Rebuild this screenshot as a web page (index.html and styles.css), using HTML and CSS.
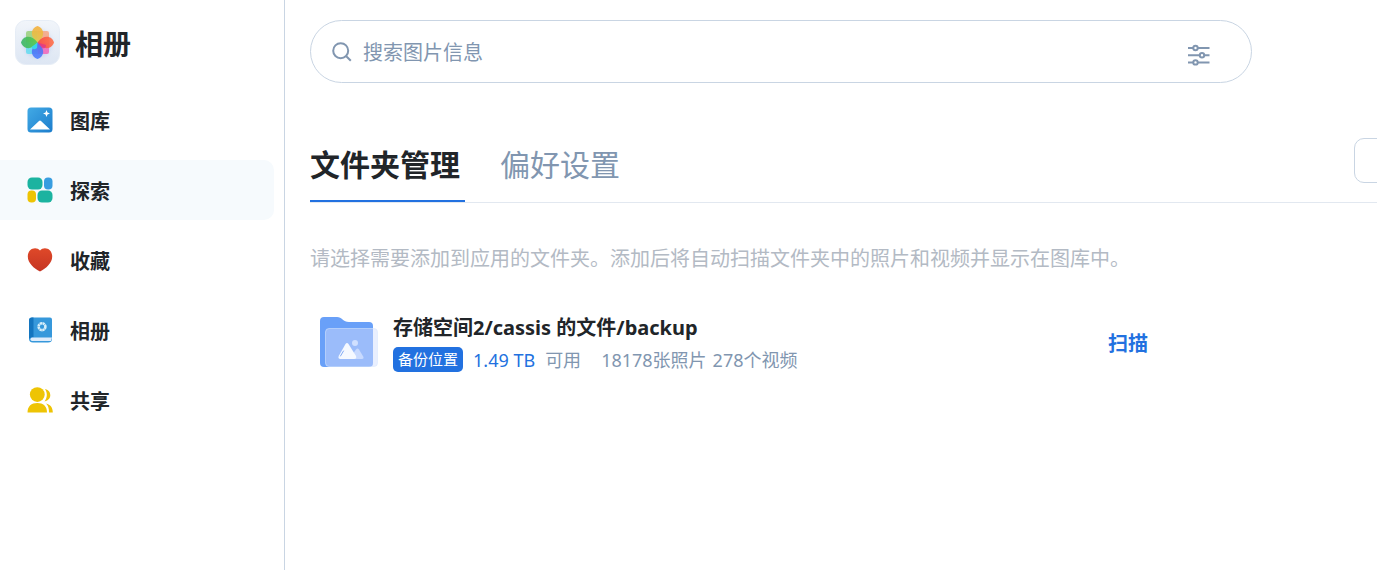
FILE: index.html
```html
<!DOCTYPE html>
<html lang="zh-CN">
<head>
<meta charset="utf-8">
<title>相册</title>
<link rel="stylesheet" href="styles.css">
</head>
<body>
<div class="app">
  <aside class="sidebar">
    <div class="brand">
      <svg class="brand-logo" viewBox="0 0 45 45" aria-hidden="true">
        <defs>
          <linearGradient id="tile" x1="0" y1="0" x2="0" y2="1"><stop offset="0" stop-color="#f1f5fa"/><stop offset="1" stop-color="#dde6f3"/></linearGradient>
          <linearGradient id="pt" x1="0" y1="0" x2="0" y2="1"><stop offset="0" stop-color="#f7b03c"/><stop offset="1" stop-color="#dfc94e"/></linearGradient>
          <linearGradient id="pr" x1="1" y1="0" x2="0" y2="0"><stop offset="0" stop-color="#ff7048"/><stop offset="1" stop-color="#f84c44"/></linearGradient>
          <linearGradient id="pb" x1="0" y1="1" x2="0" y2="0"><stop offset="0" stop-color="#4c80ff"/><stop offset="1" stop-color="#526bea"/></linearGradient>
          <linearGradient id="pl" x1="0" y1="0" x2="1" y2="0"><stop offset="0" stop-color="#38b568"/><stop offset="1" stop-color="#5bc947"/></linearGradient>
          <filter id="glow" x="-30%" y="-30%" width="160%" height="160%"><feGaussianBlur stdDeviation="2"/></filter>
        </defs>
        <rect x=".5" y=".5" width="44" height="44" rx="10" fill="url(#tile)" stroke="#e6edf6"/>
        <circle cx="22.500" cy="23.500" r="14" fill="#8aa7dc" opacity=".3" filter="url(#glow)"/>
        <path d="M22.500 22.500V11H32q2 0 2 2v9.500z" fill="#f7a681" opacity=".85"/>
        <path d="M22.500 22.500H11V13q0-2 2-2h9.500z" fill="#9dd282" opacity=".9"/>
        <path d="M22.500 22.500H34V32q0 2-2 2h-9.500z" fill="#f16cbc" opacity=".9"/>
        <path d="M22.500 22.500V34H13q-2 0-2-2v-9.500z" fill="#69dcf0" opacity=".9"/>
        <path d="M22.500 22.500C14 16 16 8 22.500 6C29 8 31 16 22.500 22.500z" fill="url(#pt)" opacity=".9"/>
        <path d="M22.500 22.500C29 14 37 16 39 22.500C37 29 29 31 22.500 22.500z" fill="url(#pr)" opacity=".9"/>
        <path d="M22.500 22.500C14 29 16 37 22.500 39C29 37 31 29 22.500 22.500z" fill="url(#pb)" opacity=".9"/>
        <path d="M22.500 22.500C16 14 8 16 6 22.500C8 29 16 31 22.500 22.500z" fill="url(#pl)" opacity=".9"/>
        <path d="M22.500 22.500L16.500 27Q18 31 22 28z" fill="#38d5e8"/>
        <path d="M22.500 22.500L27 28Q31 29 31 25z" fill="#df388a" opacity=".8"/>
      </svg>
      <h1 class="brand-name">相册</h1>
    </div>
    <nav class="nav">
      <a class="nav-item" href="#">
        <svg class="nav-icon" viewBox="0 0 26 26" aria-hidden="true">
          <defs><linearGradient id="sky" x1="0" y1="0" x2="1" y2="1"><stop offset="0" stop-color="#42aae5"/><stop offset="1" stop-color="#1c7dcc"/></linearGradient></defs>
          <rect x=".5" y=".5" width="25" height="25" rx="3.500" fill="url(#sky)"/>
          <path d="M3 22.500L12 14q1-1 2 0L23 22.500z" fill="#fff"/>
          <path d="M19.500 3l1 2.500 2.500 1-2.500 1-1 2.500-1-2.500-2.500-1 2.500-1z" fill="#fff"/>
        </svg>
        <span>图库</span>
      </a>
      <a class="nav-item active" href="#" aria-current="page">
        <svg class="nav-icon" viewBox="0 0 26 26" aria-hidden="true">
          <rect x=".5" y=".5" width="15" height="12" rx="4.500" fill="#1bb3a0"/>
          <rect x="17" y=".5" width="8.500" height="12" rx="4" fill="#389de0"/>
          <rect x=".5" y="13.500" width="8.500" height="12" rx="4" fill="#eec404"/>
          <rect x="10.500" y="13.500" width="15" height="12" rx="4.500" fill="#1bb3a0"/>
        </svg>
        <span>探索</span>
      </a>
      <a class="nav-item" href="#">
        <svg class="nav-icon" viewBox="0 0 26 26" aria-hidden="true">
          <defs><linearGradient id="heart" x1="0" y1="0" x2="0" y2="1"><stop offset="0" stop-color="#df4929"/><stop offset="1" stop-color="#c53523"/></linearGradient></defs>
          <path d="M13 3.500C9-1 .8 1.500.8 9.500C.8 16 7 21.500 13 24.500C19 21.500 25.200 16 25.200 9.500C25.200 1.500 17-1 13 3.500z" fill="url(#heart)"/>
        </svg>
        <span>收藏</span>
      </a>
      <a class="nav-item" href="#">
        <svg class="nav-icon" viewBox="0 0 26 26" aria-hidden="true">
          <path d="M5 .5H23q2 0 2 2V22q0 3.500-4 3.500H6q-4 0-4-4V3.500q0-3 3-3z" fill="#3698db"/>
          <path d="M2 3.500q0-3 3-3h1.500v20H5q-3 0-3 2z" fill="#1475bf"/>
          <path d="M5 20.500H25l-1 3.500H5q-1.500 0-1.500-1.700T5 20.500z" fill="#dfecfb"/>
          <circle cx="15" cy="9.700" r="3.400" fill="none" stroke="#d6eefa" stroke-width="2.600" stroke-dasharray="2.300 .37"/>
        </svg>
        <span>相册</span>
      </a>
      <a class="nav-item" href="#">
        <svg class="nav-icon" viewBox="0 0 26 26" aria-hidden="true" fill="#eec404">
          <circle cx="10.300" cy="7.600" r="7.400"/>
          <path d="M.5 25.500C.5 19 4.500 16 10.300 16S20 19 20 25.500z"/>
          <path d="M18 2C22 3 23.300 5.500 23.300 8.300S21.500 13.500 17.500 14.500C20.500 10.500 20.500 6 18 2z"/>
          <path d="M19 16.500C23.500 17.500 25.800 20.500 25.800 25.500H22C22 21 21 18.500 19 16.500z"/>
        </svg>
        <span>共享</span>
      </a>
    </nav>
  </aside>

  <main class="main">
    <form class="search">
      <svg class="search-icon" viewBox="0 0 20 20" aria-hidden="true"><circle cx="8.700" cy="8.700" r="7.500"/><path d="M14 14l4.800 4.800"/></svg>
      <input class="search-input" type="text" placeholder="搜索图片信息" aria-label="搜索图片信息">
      <button class="filter" type="button" aria-label="筛选">
        <svg class="filter-icon" viewBox="0 0 22 22" aria-hidden="true"><path d="M0 4H21.500M0 11.200H21.500M0 18.400H21.500"/><g fill="#fff"><circle cx="7.500" cy="4" r="2.200"/><circle cx="14" cy="11.200" r="2.200"/><circle cx="7.500" cy="18.400" r="2.200"/></g></svg>
      </button>
    </form>

    <div class="toolbar">
      <div class="tabs" role="tablist">
        <button class="tab selected" type="button" role="tab" aria-selected="true">文件夹管理</button>
        <button class="tab" type="button" role="tab" aria-selected="false">偏好设置</button>
      </div>
      <button class="add" type="button" aria-label="添加文件夹"></button>
    </div>

    <p class="hint">请选择需要添加到应用的文件夹。添加后将自动扫描文件夹中的照片和视频并显示在图库中。</p>

    <section class="folder">
      <svg class="folder-icon" viewBox="0 0 58 50" aria-hidden="true">
        <path d="M0 4Q0 0 4 0H17C22 0 23 5 29 5H49Q53 5 53 9V46Q53 50 49 50H4Q0 50 0 46z" fill="#69a0f8"/>
        <rect x="5.500" y="11.500" width="52" height="38" rx="3.500" fill="#c5d4fb" fill-opacity=".54" stroke="#dde9fe" stroke-opacity=".55"/>
        <path d="M53 12H54Q57 12 57 15V46Q57 49 54 49H53z" fill="#e9effe"/>
        <circle cx="35" cy="26" r="3" fill="#d0e0ff"/>
        <path d="M29 42L36 32.500Q37.500 30.500 39 32.500L43.500 40Q44 42 42 42z" fill="#c8dafe"/>
        <path d="M20 42Q17.500 41.500 19 38.500L25.500 27Q27 25 28.500 27L36 39Q37 42 34 42z" fill="#f5f9ff"/>
        <path d="M20.500 39L23.500 34" stroke="#82abf5" fill="none" stroke-linecap="round"/>
      </svg>
      <div class="folder-info">
        <h2 class="folder-path">存储空间2/cassis 的文件/backup</h2>
        <div class="folder-meta">
          <span class="badge">备份位置</span>
          <span class="size">1.49 TB</span>
          <span>可用</span>
          <span class="photos">18178张照片</span>
          <span class="videos">278个视频</span>
        </div>
      </div>
      <button class="scan" type="button">扫描</button>
    </section>
  </main>
</div>
</body>
</html>
```
FILE: styles.css
```css
* {
  box-sizing: border-box;
}

body {
  margin: 0;
  background: #fff;
  color: #212529;
  font-family: "Noto Sans", "Noto Sans CJK SC", sans-serif;
  font-size: 20px;
}

button,
input {
  padding: 0;
  border: 0;
  background: none;
  color: inherit;
  font: inherit;
}

button {
  cursor: pointer;
}

h1,
h2,
p {
  margin: 0;
}

.app {
  display: flex;
  min-height: 100vh;
}

.sidebar {
  flex: none;
  width: 285px;
  padding: 20px 10px 20px 0;
  border-right: 1px solid #c9d5e3;
}

.brand {
  display: flex;
  align-items: flex-start;
  gap: 15px;
  height: 45px;
  padding-left: 15px;
}

.brand-logo {
  width: 45px;
  height: 45px;
}

.brand-name {
  font-size: 28px;
  line-height: 48px;
}

.nav {
  display: flex;
  flex-direction: column;
  gap: 10px;
  margin-top: 25px;
}

.nav-item {
  display: flex;
  align-items: center;
  gap: 17px;
  height: 60px;
  padding-left: 27px;
  border-radius: 0 10px 10px 0;
  color: inherit;
  font-weight: 700;
  text-decoration: none;
}

.nav-item.active {
  background: #f6fafd;
}

.nav-icon {
  width: 26px;
  height: 26px;
}

.main {
  flex: 1;
  min-width: 0;
  padding: 20px 0 20px 25px;
  overflow: hidden;
}

.search {
  display: flex;
  align-items: center;
  height: 63px;
  margin-right: 125px;
  padding: 0 41px 0 21px;
  border: 1px solid #c9d5e3;
  border-radius: 32px;
  color: #8196b0;
}

.search-icon {
  flex: none;
  width: 20px;
  height: 20px;
  fill: none;
  stroke: #8196b0;
  stroke-width: 2;
}

.search-input {
  flex: 1;
  min-width: 0;
  margin: 0 11px;
  padding-top: 2px;
  outline: 0;
}

.search-input::placeholder {
  color: #8196b0;
  opacity: 1;
}

.filter {
  display: flex;
  padding-top: 6px;
}

.filter-icon {
  width: 22px;
  height: 22px;
  fill: none;
  stroke: #8196b0;
  stroke-width: 2;
}

.toolbar {
  display: flex;
  align-items: flex-start;
  justify-content: space-between;
  margin: 55px -100px 0 0;
  border-bottom: 1px solid #e2e8f0;
}

.tabs {
  display: flex;
  gap: 35px;
}

.tab {
  height: 64px;
  padding: 0 5px 12px 0;
  border-bottom: 2px solid transparent;
  color: #8196b0;
  font-size: 30px;
}

.tab.selected {
  border-bottom-color: #2271e0;
  color: #212529;
  font-weight: 700;
}

.add {
  width: 123px;
  height: 45px;
  border: 1px solid #c9d5e3;
  border-radius: 10px;
}

.hint {
  margin-top: 41px;
  color: #b3bac4;
  line-height: 30px;
}

.folder {
  display: flex;
  align-items: center;
  margin-top: 38px;
  padding: 0 229px 0 10px;
}

.folder-icon {
  flex: none;
  align-self: flex-start;
  width: 58px;
  height: 50px;
  margin-top: 5px;
}

.folder-info {
  flex: 1;
  min-width: 0;
  margin-left: 15px;
}

.folder-path {
  font-size: 20px;
  line-height: 32px;
}

.folder-meta {
  display: flex;
  align-items: flex-start;
  gap: 10px;
  margin-top: 3px;
  color: #8196b0;
  font-size: 18px;
  line-height: 26px;
}

.badge {
  padding: 0 5px;
  border-radius: 5px;
  background: #2271e0;
  color: #fff;
  font-size: 15px;
  line-height: 25px;
}

.size {
  color: #2271e0;
}

.photos {
  margin-left: 10px;
}

.videos {
  margin-left: -4px;
}

.scan {
  color: #2271e0;
  font-weight: 700;
}
```
